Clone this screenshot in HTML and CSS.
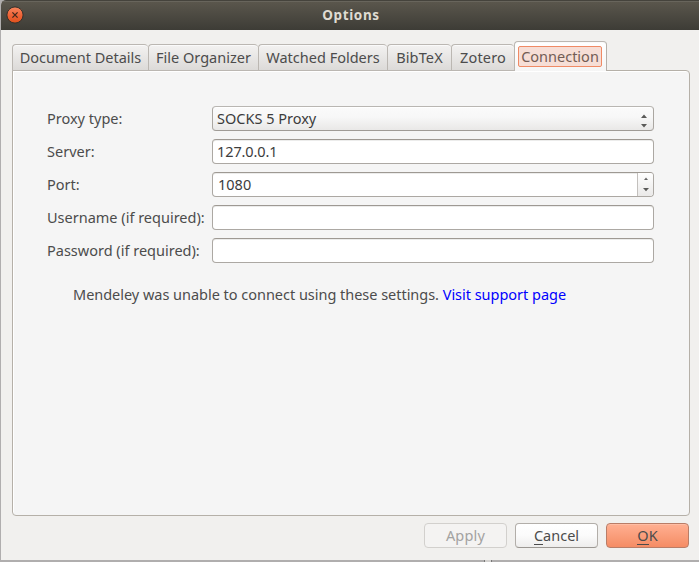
FILE: index.html
```
<!DOCTYPE html>
<html lang="en">
<head>
<meta charset="utf-8">
<title>Options</title>
<link rel="stylesheet" href="styles.css">
</head>
<body>
<div class="window">
  <header class="titlebar">
    <svg class="close" width="18" height="18" viewBox="0 0 18 18">
      <defs><linearGradient id="orange" x1="0" y1="0" x2="0" y2="1"><stop offset="0" stop-color="#f7875f"/><stop offset=".5" stop-color="#ef6438"/><stop offset="1" stop-color="#e0511c"/></linearGradient></defs>
      <circle cx="9" cy="9" r="8.1" fill="url(#orange)" stroke="#34302a" stroke-width="1"/>
      <path d="M6.4 6.4l5.2 5.2M11.6 6.4l-5.2 5.2" stroke="#43291c" stroke-width="1.3"/>
    </svg>
    <h1>Options</h1>
  </header>
  <main>
    <nav class="tabs">
      <div class="tab details">Document Details</div>
      <div class="tab organizer">File Organizer</div>
      <div class="tab folders">Watched Folders</div>
      <div class="tab bibtex">BibTeX</div>
      <div class="tab zotero">Zotero</div>
      <div class="tab active"><span>Connection</span></div>
    </nav>
    <section class="panel">
      <div class="form">
        <label>Proxy type:</label>
        <div class="field combo"><span class="socks">SOCKS 5 Proxy</span>
          <svg class="arrows" width="6" height="14" viewBox="0 0 6 14"><path d="M0 4L3 .6L6 4zM0 10L3 13.4L6 10z" fill="#5a5a58"/></svg>
        </div>
        <label>Server:</label>
        <div class="field"><span class="ip">127.0.0.1</span></div>
        <label>Port:</label>
        <div class="field spin"><span>1080</span>
          <div class="stepper"><svg width="6" height="16" viewBox="0 0 6 16"><path d="M1 4L3 1.4L5 4z" fill="#666"/><path d="M0 12L3 15.2L6 12z" fill="#5a5a58"/></svg></div>
        </div>
        <label>Username (if required):</label>
        <div class="field"></div>
        <label>Password (if required):</label>
        <div class="field"></div>
      </div>
      <p class="message">Mendeley was unable to connect using these settings. <a>Visit support page</a></p>
    </section>
    <footer class="actions">
      <div class="button disabled">Apply</div>
      <div class="button"><span><u>C</u>ancel</span></div>
      <div class="button primary"><span><u>O</u>K</span></div>
    </footer>
  </main>
</div>
<div class="below"></div>
</body>
</html>
```
FILE: styles.css
```
* { box-sizing: border-box; }
body {
  margin: 0;
  width: 699px;
  height: 562px;
  overflow: hidden;
  background: #b0aeae;
  color: #4c4c4c;
  font: 14.5px/20px "Noto Sans", sans-serif;
  white-space: nowrap;
}
.window {
  height: 560px;
  margin-left: 1px;
  background: #f1f0ee;
  border-top-left-radius: 5px;
  overflow: hidden;
}
.titlebar {
  position: relative;
  height: 30px;
  background: linear-gradient(#5b574d, #3d3c36);
  border-top: 1px solid #45433c;
  box-shadow: inset 0 1px #68655c;
}
.close { position: absolute; left: 5px; top: 5px; }
h1 {
  margin: 0;
  padding: 4px 0 0 2px;
  text-align: center;
  font-size: 13.5px;
  line-height: 20px;
  letter-spacing: .6px;
  color: #dfdbd2;
}
main { padding: 11px 9px 0 11px; }
.tabs {
  display: flex;
  align-items: flex-end;
  height: 30px;
  position: relative;
  z-index: 1;
}
.tab {
  height: 27px;
  padding-top: 2px;
  text-align: center;
  border: 1px solid #bbb7b2;
  border-right: 0;
  border-radius: 4px 4px 0 0;
  background: linear-gradient(#f3f2f1, #dcdad8);
  box-shadow: inset 0 1px #fafafa;
}
.details { width: 136px; }
.organizer { width: 110px; }
.folders { width: 129px; }
.bibtex { width: 64px; letter-spacing: .15px; }
.zotero { width: 63px; letter-spacing: .15px; }
.active {
  width: 93px;
  height: 30px;
  padding: 4px 4px 0 3px;
  border-right: 1px solid #b5b0aa;
  border-bottom: 0;
  background: linear-gradient(#fff, #fafafa 60%, #f5f5f5);
}
.active span {
  display: block;
  height: 21px;
  line-height: 19px;
  border: 1px solid #f08a65;
  border-radius: 2px;
  background: #f6ded6;
  color: #725c54;
}
.panel {
  height: 446px;
  margin-top: -1px;
  padding: 35px 34px 0;
  border: 1px solid #b5b0a8;
  border-radius: 0 4px 4px 4px;
  background: #f5f5f5;
  box-shadow: inset 1px 1px #fff;
}
.form {
  display: grid;
  grid-template-columns: 165px 442px;
  grid-auto-rows: 25px;
  row-gap: 8px;
  line-height: 24px;
}
.field {
  display: flex;
  justify-content: space-between;
  padding-left: 4px;
  line-height: 23px;
  color: #3c3c3c;
  border: 1px solid #aca8a3;
  border-top-color: #9e9993;
  border-radius: 4px;
  background: #fff;
  box-shadow: inset 0 1px #ececeb;
}
.ip { letter-spacing: -.1px; }
.combo {
  padding-right: 6px;
  align-items: flex-start;
  border-color: #b9b6b2 #aaa6a1 #9f9b96;
  background: linear-gradient(#fbfbfb, #f7f7f7 45%, #e9e8e7);
  box-shadow: inset 0 1px #fff;
}
.arrows { margin-top: 7px; }
.spin { padding-left: 5px; }
.stepper {
  width: 16px;
  padding: 3px 0 0 5px;
  border-left: 1px solid #c3c0bd;
  border-radius: 0 3px 3px 0;
  background: linear-gradient(#fff, #eae9e8);
  line-height: 0;
}
.message { margin: 21px 0 0 26px; letter-spacing: -.025px; }
.message a { color: #00f; }
.actions {
  display: flex;
  justify-content: flex-end;
  gap: 8px;
  padding: 7px 1px 0 0;
}
.button {
  width: 83px;
  height: 25px;
  text-align: center;
  line-height: 23px;
  border: 1px solid #b2aea9;
  border-bottom-color: #9b9792;
  border-radius: 4px;
  background: linear-gradient(#fff, #fbfbfb 50%, #eeedec);
}
.button u {
  display: inline-block;
  height: 21px;
  border-bottom: 1px solid #4c4c4c;
  text-decoration: none;
  vertical-align: top;
}
.disabled {
  color: #a3a2a1;
  letter-spacing: .2px;
  border-color: #d2d0cd;
  background: #f4f3f2;
}
.primary {
  border-color: #b97d67;
  background: linear-gradient(#ffb092, #f58c64);
  box-shadow: inset 0 1px #ffbda4;
}
.below {
  width: 8px;
  height: 2px;
  margin-left: 484px;
  background: #d3d1cf;
  border: solid #777;
  border-width: 0 1px;
}
```
